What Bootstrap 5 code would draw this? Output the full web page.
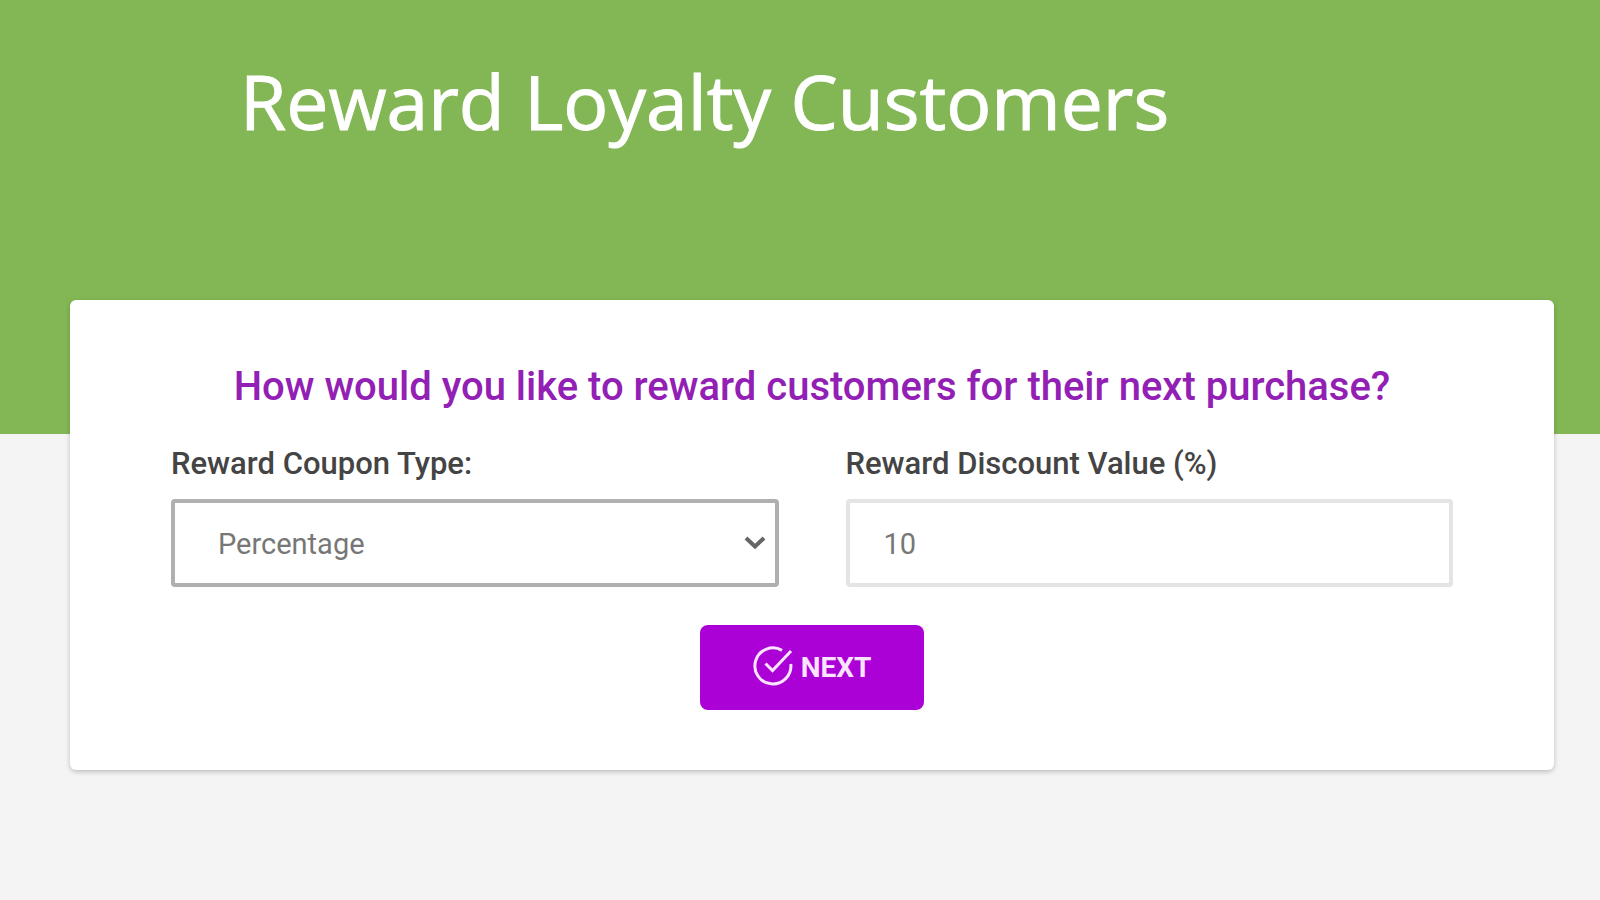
<!DOCTYPE html>
<html lang="en">
<head>
<meta charset="utf-8">
<meta name="viewport" content="width=device-width, initial-scale=1">
<title>Reward Loyalty Customers</title>
<link href="https://cdn.jsdelivr.net/npm/bootstrap@5.3.0/dist/css/bootstrap.min.css" rel="stylesheet">
<style>
  body { background: #f4f4f4; font-family: Roboto, sans-serif; }
  .hero { background: #83b755; height: 434px; padding: 47px 15%; }
  .hero h1 { color: #fff; font-family: "Open Sans", sans-serif; font-size: 75px; line-height: 108px; font-weight: 400; -webkit-text-stroke: 1px #fff; }
  .reward-wrap { padding: 0 46px 48px 70px; margin-top: -134px; }
  .reward-card { border-radius: 6px; padding: 65px 101px 60px; box-shadow: 0 2px 5px rgba(0,0,0,.22); }
  .reward-card h2 { color: #9320b4; font-size: 40px; line-height: 44px; font-weight: 500; margin-bottom: 35px; }
  .field-row { --bs-gutter-x: 67px; }
  .field-row label { color: #444; font-size: 31px; line-height: 40px; font-weight: 500; margin-bottom: 15px; }
  .reward-field { height: 88px; border: 4px solid #e4e4e4; border-radius: 4px; background-color: #fff; color: #777; font-size: 29px; line-height: 40px; padding: 21px 34px 19px; }
  .reward-select { border-color: #b0b0b0; padding-left: 43px;
    background-image: url("data:image/svg+xml,%3Csvg xmlns='http://www.w3.org/2000/svg' viewBox='0 0 22 14'%3E%3Cpath d='M2 2l9 8.500 9-8.500' fill='none' stroke='%23666' stroke-width='4'/%3E%3C/svg%3E");
    background-size: 22px 14px; background-position: right 9px center; }
  .form-actions { margin-top: 38px; }
  .btn-next { background: #ab00d6; color: #fbe4ff; width: 224px; height: 85px; border: 0; border-radius: 8px; font-size: 28px; font-weight: 700; line-height: 40px; }
  .btn-next:hover { background: #9700bd; color: #fff; }
</style>
</head>
<body>
<header class="hero">
  <h1 class="m-0">Reward Loyalty Customers</h1>
</header>
<main class="reward-wrap">
  <form class="card reward-card border-0">
    <h2 class="text-center">How would you like to reward customers for their next purchase?</h2>
    <div class="row field-row">
      <div class="col-6">
        <label class="d-block" for="couponType">Reward Coupon Type:</label>
        <select class="form-select reward-field reward-select" id="couponType">
          <option selected>Percentage</option>
        </select>
      </div>
      <div class="col-6">
        <label class="d-block" for="discountValue">Reward Discount Value (%)</label>
        <input class="form-control reward-field" id="discountValue" type="text" value="10">
      </div>
    </div>
    <div class="form-actions d-flex justify-content-center">
      <button type="button" class="btn btn-next d-flex align-items-center justify-content-center gap-2 p-0">
        <svg class="mb-1" width="40" height="40" viewBox="0 -1 40 40" fill="none" stroke="currentColor" stroke-width="3" aria-hidden="true">
          <path d="M29 3.400A18 18 0 1 0 37.800 17"/>
          <path d="M12.500 16.500l7 7L38 4"/>
        </svg>
        <span>NEXT</span>
      </button>
    </div>
  </form>
</main>
<script src="https://cdn.jsdelivr.net/npm/bootstrap@5.3.0/dist/js/bootstrap.bundle.min.js"></script>
</body>
</html>
